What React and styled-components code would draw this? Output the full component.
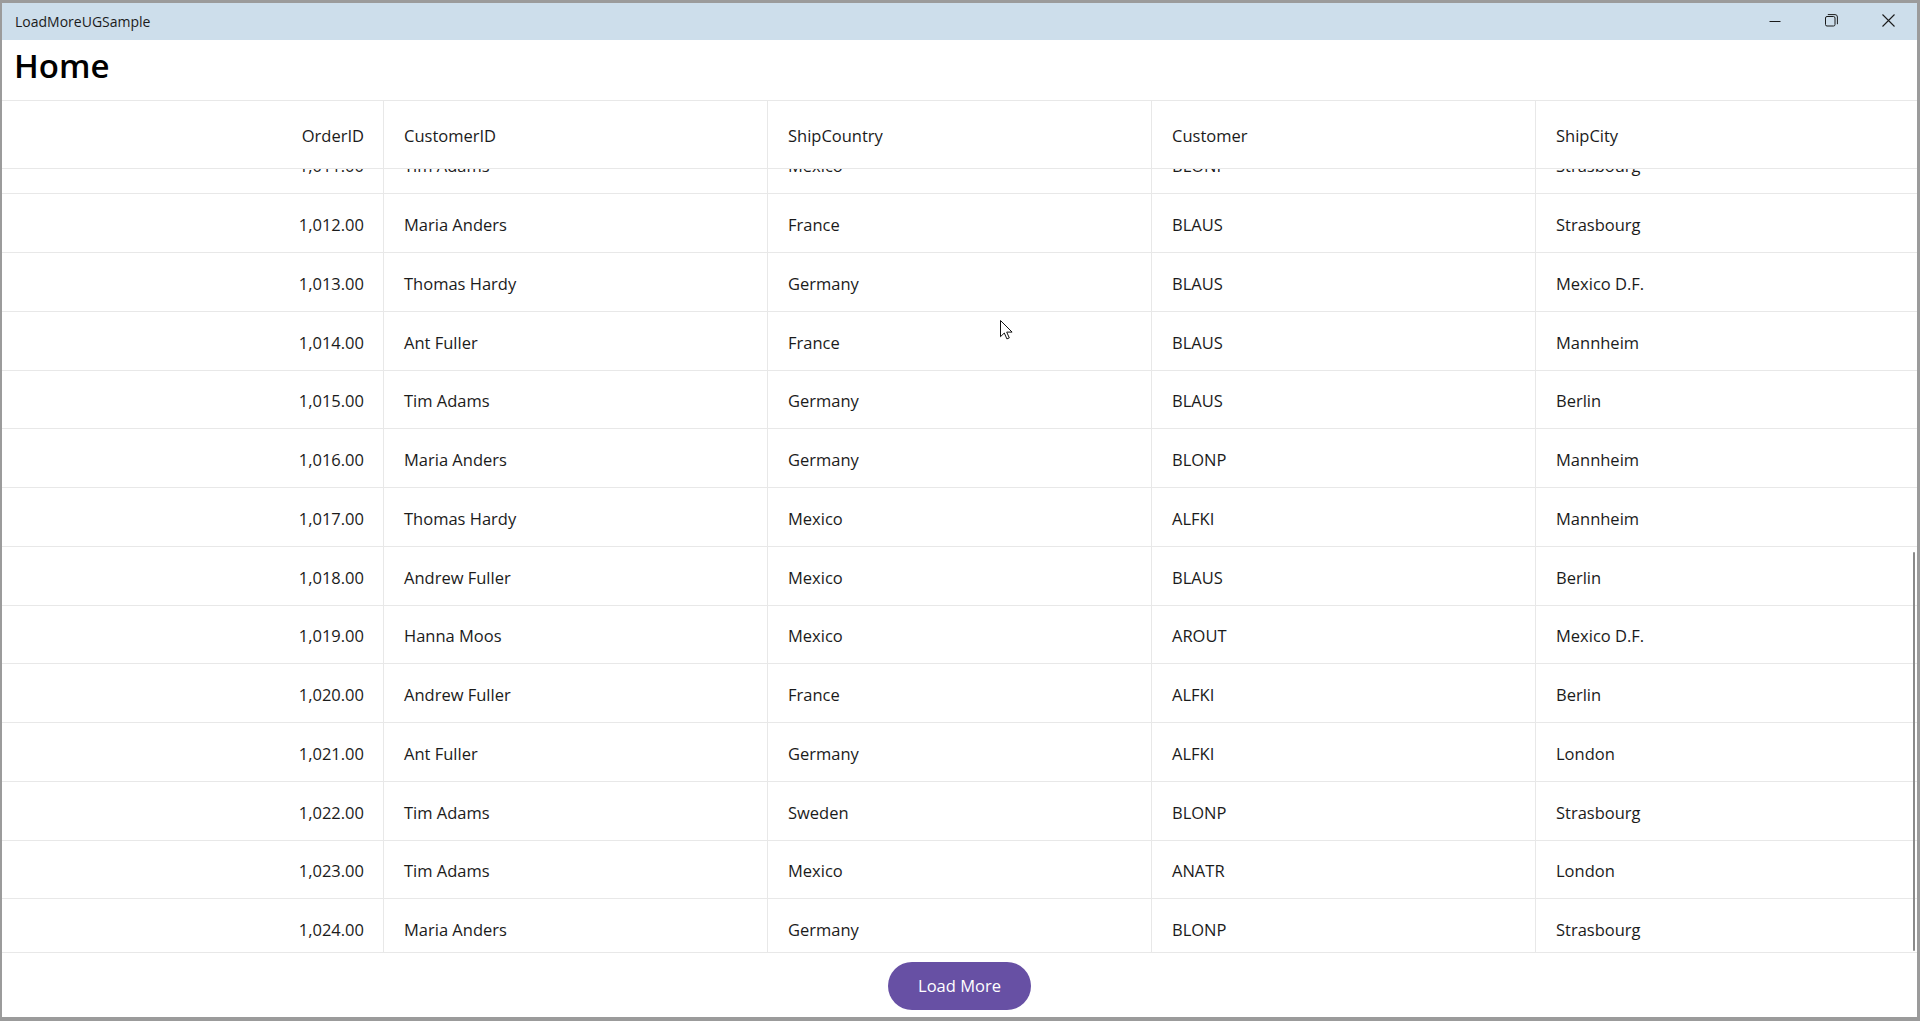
import React from "react";
import styled, { createGlobalStyle } from "styled-components";

const orders = [
  [1011, "Tim Adams", "Mexico", "BLONP", "Strasbourg"],
  [1012, "Maria Anders", "France", "BLAUS", "Strasbourg"],
  [1013, "Thomas Hardy", "Germany", "BLAUS", "Mexico D.F."],
  [1014, "Ant Fuller", "France", "BLAUS", "Mannheim"],
  [1015, "Tim Adams", "Germany", "BLAUS", "Berlin"],
  [1016, "Maria Anders", "Germany", "BLONP", "Mannheim"],
  [1017, "Thomas Hardy", "Mexico", "ALFKI", "Mannheim"],
  [1018, "Andrew Fuller", "Mexico", "BLAUS", "Berlin"],
  [1019, "Hanna Moos", "Mexico", "AROUT", "Mexico D.F."],
  [1020, "Andrew Fuller", "France", "ALFKI", "Berlin"],
  [1021, "Ant Fuller", "Germany", "ALFKI", "London"],
  [1022, "Tim Adams", "Sweden", "BLONP", "Strasbourg"],
  [1023, "Tim Adams", "Mexico", "ANATR", "London"],
  [1024, "Maria Anders", "Germany", "BLONP", "Strasbourg"],
];

const columns = ["OrderID", "CustomerID", "ShipCountry", "Customer", "ShipCity"];

const formatId = (n) =>
  n.toLocaleString("en-US", { minimumFractionDigits: 2, maximumFractionDigits: 2 });

export default function App() {
  return (
    <>
      <GlobalStyle />
      <Window>
        <TitleBar>
          <AppName>LoadMoreUGSample</AppName>
          <Captions>
            <CaptionButton>
              <svg width="12" height="12" viewBox="0 0 12 12">
                <path d="M0.5 6.5h11" stroke="#1b1b1b" strokeWidth="1" fill="none" />
              </svg>
            </CaptionButton>
            <CaptionButton>
              <svg width="13" height="13" viewBox="0 0 13 13">
                <rect x="0.5" y="2.5" width="9.5" height="9.5" rx="1.5" stroke="#1b1b1b" fill="none" />
                <path d="M2.8 0.6h7.2a2.4 2.4 0 0 1 2.4 2.4v7.2" stroke="#1b1b1b" fill="none" />
              </svg>
            </CaptionButton>
            <CaptionButton>
              <svg width="13" height="13" viewBox="0 0 13 13">
                <path d="M0.5 0.5l12 12M12.5 0.5l-12 12" stroke="#1b1b1b" strokeWidth="1.1" fill="none" />
              </svg>
            </CaptionButton>
          </Captions>
        </TitleBar>

        <PageTitle>Home</PageTitle>

        <HeaderRow>
          {columns.map((c, i) => (
            <HeaderCell key={c} $right={i === 0} $last={i === columns.length - 1}>
              {c}
            </HeaderCell>
          ))}
        </HeaderRow>

        <Viewport>
          <Rows>
            {orders.map((o) => (
              <Row key={o[0]}>
                <Cell $right>{formatId(o[0])}</Cell>
                <Cell>{o[1]}</Cell>
                <Cell>{o[2]}</Cell>
                <Cell>{o[3]}</Cell>
                <Cell $last>{o[4]}</Cell>
              </Row>
            ))}
          </Rows>
          <ScrollThumb />
        </Viewport>

        <Footer>
          <LoadMoreButton>Load More</LoadMoreButton>
        </Footer>

        <Pointer width="13" height="20" viewBox="0 0 13 20">
          <path
            d="M0.5 0.5v16.2l3.8-3.7 2.6 5.9 2.4-1-2.6-5.8h5.4z"
            fill="#fff"
            stroke="#111"
            strokeWidth="1"
            strokeLinejoin="miter"
          />
        </Pointer>
      </Window>
    </>
  );
}

const GlobalStyle = createGlobalStyle`
  html, body {
    margin: 0;
    padding: 0;
    height: 100%;
    background: #9b9b9b;
  }
  #root {
    height: 100%;
  }
`;

const Window = styled.div`
  position: relative;
  height: 100vh;
  box-sizing: border-box;
  border-style: solid;
  border-color: #9b9b9b;
  border-width: 3px 3px 4px 2px;
  background: #ffffff;
  display: flex;
  flex-direction: column;
  font-family: "Open Sans", "Noto Sans", sans-serif;
  color: #1b1b1b;
  overflow: hidden;
`;

const TitleBar = styled.div`
  height: 37px;
  flex-shrink: 0;
  background: #cddeeb;
  display: flex;
  align-items: center;
  padding-left: 13px;
`;

const AppName = styled.div`
  font-size: 14px;
  color: #1b1b1b;
  padding-bottom: 1px;
`;

const Captions = styled.div`
  margin-left: auto;
  display: flex;
  height: 100%;
`;

const CaptionButton = styled.div`
  width: 57px;
  height: 100%;
  display: flex;
  align-items: center;
  justify-content: center;
  padding-bottom: 2px;
  box-sizing: border-box;
`;

const PageTitle = styled.h1`
  margin: 0;
  height: 61px;
  flex-shrink: 0;
  box-sizing: border-box;
  padding: 3px 0 0 12px;
  font-size: 33px;
  line-height: 45px;
  font-weight: 600;
  color: #000;
  border-bottom: 1px solid #e8e8e8;
`;

const gridColumns = "382px 384px 384px 384px 1fr";

const HeaderRow = styled.div`
  display: grid;
  grid-template-columns: ${gridColumns};
  height: 68px;
  flex-shrink: 0;
  box-sizing: border-box;
  border-bottom: 1px solid #e8e8e8;
  background: #fff;
`;

const HeaderCell = styled.div`
  display: flex;
  align-items: center;
  justify-content: ${(p) => (p.$right ? "flex-end" : "flex-start")};
  padding: 1px ${(p) => (p.$right ? "19px" : "20px")} 0 ${(p) => (p.$right ? "0" : "20px")};
  font-size: 16.5px;
  color: #1b1b1b;
  border-right: ${(p) => (p.$last ? "none" : "1px solid #e8e8e8")};
`;

const Viewport = styled.div`
  position: relative;
  flex: 1;
  overflow: hidden;
`;

const Rows = styled.div`
  margin-top: -33.5px;
`;

const Row = styled.div`
  display: grid;
  grid-template-columns: ${gridColumns};
  height: 58.75px;
  box-sizing: border-box;
  border-bottom: 1px solid #e8e8e8;
`;

const Cell = styled.div`
  display: flex;
  align-items: center;
  justify-content: ${(p) => (p.$right ? "flex-end" : "flex-start")};
  padding: 3px ${(p) => (p.$right ? "19px" : "20px")} 0 ${(p) => (p.$right ? "0" : "20px")};
  font-size: 16.5px;
  color: #1b1b1b;
  white-space: nowrap;
  border-right: ${(p) => (p.$last ? "none" : "1px solid #e8e8e8")};
`;

const ScrollThumb = styled.div`
  position: absolute;
  right: 2px;
  top: 383px;
  bottom: 1px;
  width: 2px;
  border-radius: 1px;
  background: #8a8a8a;
`;

const Footer = styled.div`
  height: 65px;
  flex-shrink: 0;
  box-sizing: border-box;
  border-top: 1px solid #e8e8e8;
  display: flex;
  justify-content: center;
  padding-top: 9px;
`;

const LoadMoreButton = styled.button`
  width: 143px;
  height: 48px;
  border: none;
  border-radius: 24px;
  background: #6750a4;
  color: #fff;
  font-family: "Open Sans", "Noto Sans", sans-serif;
  font-size: 16.5px;
  padding: 0 0 2px;
  cursor: pointer;
`;

const Pointer = styled.svg`
  position: absolute;
  left: 998px;
  top: 317px;
  pointer-events: none;
`;
